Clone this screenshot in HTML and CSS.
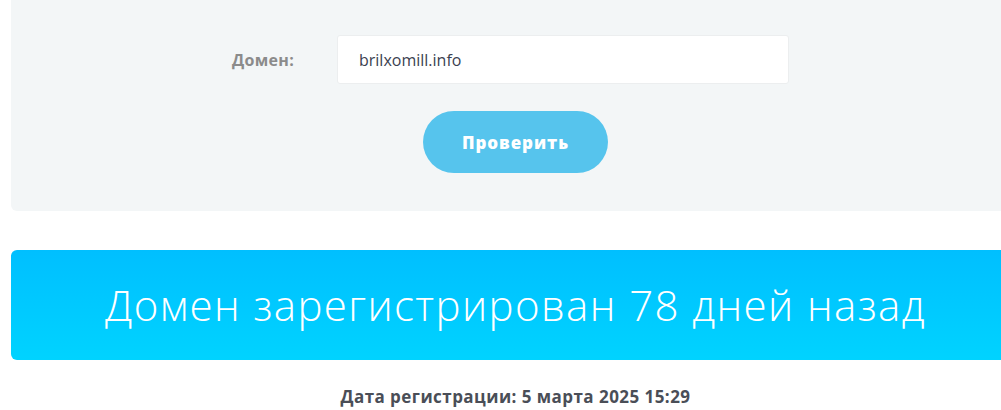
FILE: index.html
```html
<!DOCTYPE html>
<html lang="ru">
<head>
<meta charset="utf-8">
<title>Проверка домена</title>
<link rel="stylesheet" href="styles.css">
</head>
<body>
<div class="wrap">
  <form class="panel">
    <div class="row">
      <label class="label" for="domain">Домен:</label>
      <div class="input" id="domain">brilxomill.info</div>
    </div>
    <button class="btn" type="button">Проверить</button>
  </form>
  <div class="banner">Домен зарегистрирован 78 дней назад</div>
  <p class="date">Дата регистрации: 5 марта 2025 15:29</p>
</div>
</body>
</html>
```

FILE: styles.css
```css
html, body {
  margin: 0;
  padding: 0;
  background: #ffffff;
  overflow: hidden;
}
body {
  font-family: "Open Sans", "Noto Sans", sans-serif;
}
.wrap {
  margin-left: 11px;
  width: 1009px;
}
.panel {
  display: block;
  margin: 0;
  background: #f3f6f7;
  border-radius: 0 0 6px 6px;
  padding: 35px 0 38px;
}
.row {
  display: flex;
  align-items: center;
  padding-left: 221px;
}
.label {
  width: 105px;
  font-size: 16px;
  font-weight: 700;
  letter-spacing: 0.3px;
  color: #8b8b8b;
}
.input {
  box-sizing: border-box;
  width: 452px;
  height: 49px;
  background: #ffffff;
  border: 1px solid #eceeef;
  border-radius: 3px;
  padding-left: 21px;
  display: flex;
  align-items: center;
  font-size: 16px;
  color: #3b4150;
}
.btn {
  display: block;
  margin: 27px auto 0;
  width: 185px;
  height: 62px;
  border: none;
  border-radius: 31px;
  background: #56c4ed;
  color: #ffffff;
  font-family: "Open Sans", "Noto Sans", sans-serif;
  font-size: 17px;
  font-weight: 800;
  letter-spacing: 0.9px;
}
.banner {
  margin-top: 39px;
  height: 110px;
  border-radius: 6px;
  background: linear-gradient(180deg, #00bfff 0%, #00d3ff 100%);
  color: #ffffff;
  font-size: 42px;
  font-weight: 300;
  letter-spacing: 1.4px;
  line-height: 110px;
  text-align: center;
}
.date {
  margin: 24px 0 0;
  text-align: center;
  font-size: 17px;
  font-weight: 700;
  letter-spacing: 0.45px;
  line-height: 26px;
  color: #4a4e57;
}
```
